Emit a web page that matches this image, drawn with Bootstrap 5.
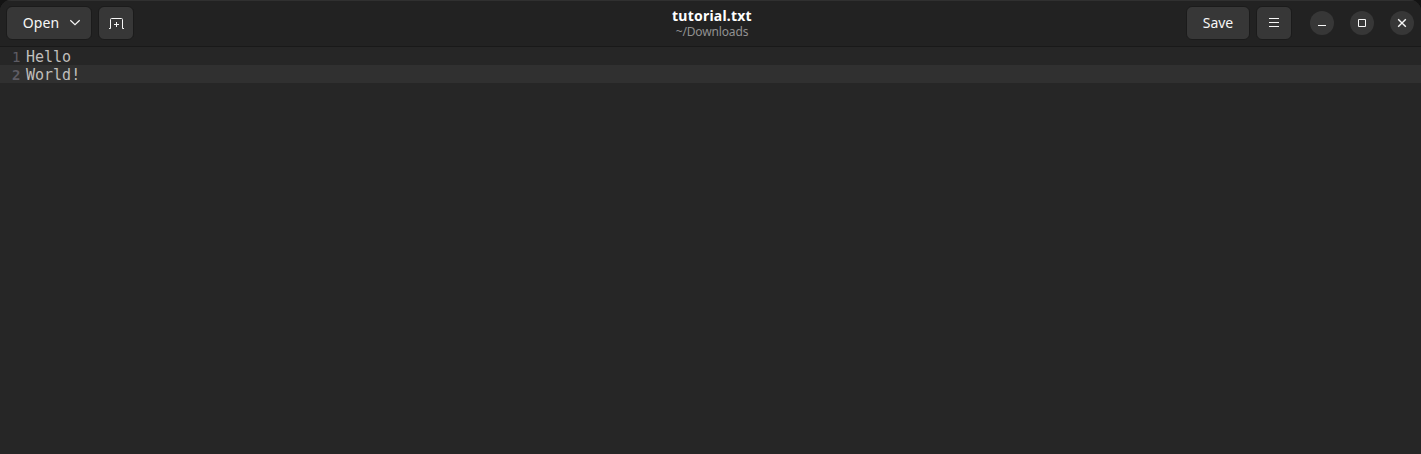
<!DOCTYPE html>
<html lang="en" data-bs-theme="dark">
<head>
<meta charset="utf-8">
<meta name="viewport" content="width=device-width, initial-scale=1">
<title>tutorial.txt</title>
<link href="https://cdn.jsdelivr.net/npm/bootstrap@5.3.0/dist/css/bootstrap.min.css" rel="stylesheet">
<style>
body{background:#131313;font-family:"Noto Sans","Open Sans",sans-serif;font-size:14px;color:#f7f7f7;overflow:hidden}
.window{background:#262626;border-radius:11px 11px 0 0;overflow:hidden}
.titlebar{height:47px;background:#222;border-bottom:1px solid #191919;box-shadow:inset 0 1px #303030;display:grid;grid-template-columns:1fr auto 1fr;padding:0 7px}
.tool{height:34px;background:#373737;border:1px solid #1b1b1b;border-radius:6px;color:#f7f7f7;font-size:14px;line-height:20px;padding:0}
.tool:hover{background:#404040}
.open-btn{width:86px;margin-left:-1px;padding-left:8px;letter-spacing:.15px}
.square{width:36px}
.new-btn{margin-left:6px}
.menu-btn{margin:0 18px 0 6px}
.save-btn{width:64px}
.circle{width:24px;height:24px;background:#373737;color:#f7f7f7;padding:0}
.doc-title{font-size:14px;line-height:18px;letter-spacing:.22px;color:#fff;padding-left:3px}
.doc-path{font-size:12px;line-height:14px;color:#919191;letter-spacing:-.15px;padding-left:3px}
.editor{font-family:"DejaVu Sans Mono",monospace;font-size:15px;line-height:20px;color:#c0bfbc}
.line-row{height:18px}
.num{width:26px;padding-left:12px;font-size:14px;color:#5e5c64}
.current{background:#303030}
.current .num{font-weight:700}
svg{display:block;fill:none;stroke:currentColor}
</style>
</head>
<body>
<div class="window vh-100 d-flex flex-column">
  <header class="titlebar align-items-center">
    <div class="d-flex">
      <button class="btn tool open-btn d-flex align-items-center justify-content-center gap-2" type="button">Open
        <svg width="16" height="16" viewBox="0 0 16 16" stroke-width="1.2"><path d="M3.3 5.3 8 9.6l4.7-4.3"/></svg>
      </button>
      <button class="btn tool square new-btn d-flex align-items-center justify-content-center" type="button" aria-label="New tab">
        <svg width="16" height="16" viewBox="0 0 16 16"><path d="M1 13.5h1.5v-9q0-1 1-1h10q1 0 1 1v9H16M8.5 7v5M6 9.5h5"/></svg>
      </button>
    </div>
    <div class="text-center">
      <div class="doc-title fw-bold">tutorial.txt</div>
      <div class="doc-path">~/Downloads</div>
    </div>
    <div class="d-flex justify-content-end align-items-center">
      <button class="btn tool save-btn" type="button">Save</button>
      <button class="btn tool square menu-btn d-flex align-items-center justify-content-center" type="button" aria-label="Menu">
        <svg width="16" height="16" viewBox="0 0 16 16"><path d="M3 3.5h10M3 7.5h10M3 11.5h10"/></svg>
      </button>
      <div class="d-flex gap-3">
        <button class="btn circle rounded-circle border-0 d-flex align-items-center justify-content-center" type="button" aria-label="Minimize"><svg width="16" height="16"><path d="M4 10.5h8"/></svg></button>
        <button class="btn circle rounded-circle border-0 d-flex align-items-center justify-content-center" type="button" aria-label="Maximize"><svg width="16" height="16"><path d="M4.5 4.5h7v7h-7z"/></svg></button>
        <button class="btn circle rounded-circle border-0 d-flex align-items-center justify-content-center" type="button" aria-label="Close"><svg width="16" height="16" stroke-width="1.4"><path d="m4.2 4.2 7.6 7.6m0-7.6-7.6 7.6"/></svg></button>
      </div>
    </div>
  </header>
  <main class="editor flex-grow-1">
    <div class="line-row d-flex"><span class="num">1</span><span>Hello</span></div>
    <div class="line-row d-flex current"><span class="num">2</span><span>World!</span></div>
  </main>
</div>
<script src="https://cdn.jsdelivr.net/npm/bootstrap@5.3.0/dist/js/bootstrap.bundle.min.js"></script>
</body>
</html>
